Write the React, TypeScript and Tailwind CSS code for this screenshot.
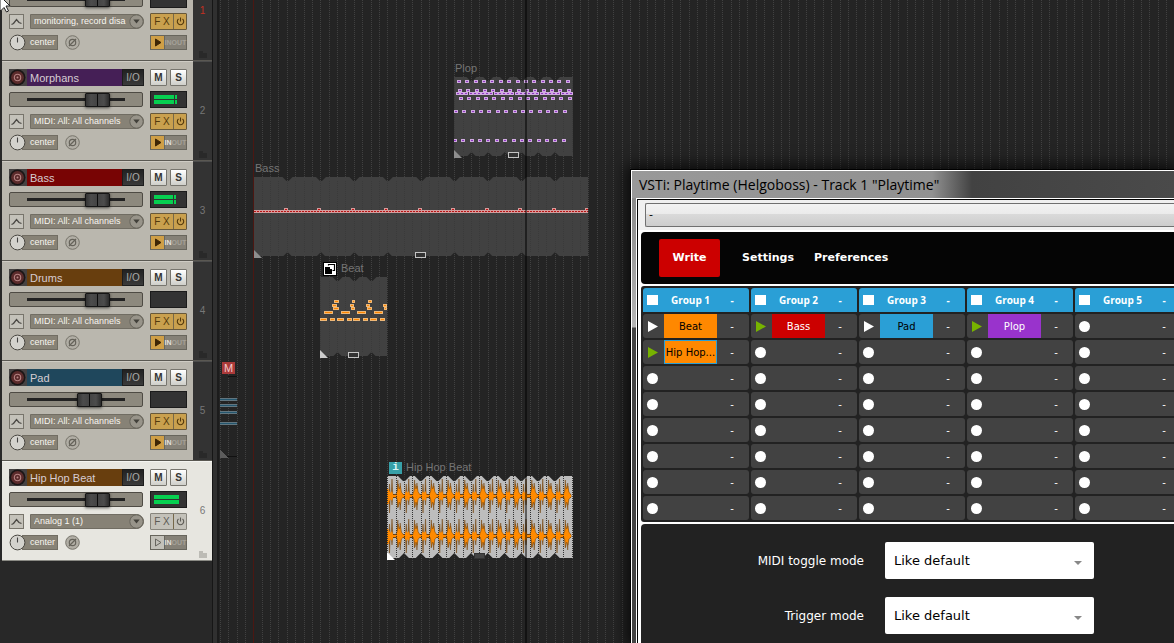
import clsx from "clsx";
import type { ReactNode } from "react";

interface Track {
  id: number;
  name: string;
  color: string;
  input: string;
  level: number;
  peak?: boolean;
  volume: number;
  fx?: boolean;
  selected?: boolean;
  inputLit?: boolean;
  scrolledOff?: boolean;
}

const MIDI_INPUT = "MIDI: All: All channels";

const tracks: Track[] = [
  { id: 1, name: "Playtime", color: "bg-[#3c3c3c]", input: "monitoring, record disa", level: 0, volume: 70, fx: true, scrolledOff: true },
  { id: 2, name: "Morphans", color: "bg-[#451f56]", input: MIDI_INPUT, level: 20, peak: true, volume: 70, fx: true, inputLit: true },
  { id: 3, name: "Bass", color: "bg-[#780404]", input: MIDI_INPUT, level: 19, peak: true, volume: 70, fx: true, inputLit: true },
  { id: 4, name: "Drums", color: "bg-[#683e0e]", input: MIDI_INPUT, level: 0, volume: 70, fx: true, inputLit: true },
  { id: 5, name: "Pad", color: "bg-[#1f475c]", input: MIDI_INPUT, level: 0, volume: 63, fx: true, inputLit: true },
  { id: 6, name: "Hip Hop Beat", color: "bg-[#683e0e]", input: "Analog 1 (1)", level: 25, volume: 70, selected: true, inputLit: true },
];

function Meter({ level, peak }: { level: number; peak?: boolean }) {
  return (
    <div className="flex h-[17px] w-[37px] flex-col justify-center gap-px border border-[#1b1b1b] bg-[#333] pl-[3px]">
      {level > 0 &&
        [0, 1].map((channel) => (
          <div key={channel} className="flex h-1 gap-px">
            <div className="bg-[#06d050]" style={{ width: level }} />
            {peak && <div className="w-0.5 bg-[#06d050]" />}
          </div>
        ))}
    </div>
  );
}

function TrackHeader({ track }: { track: Track }) {
  const smallButton =
    "flex h-[17px] w-[17px] items-center justify-center rounded-[1px] border border-[#77756e] bg-gradient-to-b from-white to-[#cfcfca] text-[10px] font-bold text-[#333]";

  return (
    <div className="flex h-[17px] items-center">
      <button type="button" aria-label="Record arm" className="flex h-full w-[18px] items-center bg-[#454242]">
        <svg viewBox="0 0 17 17" className="h-[17px] w-[17px]">
          <circle cx="8.5" cy="8.5" r="8" fill="#1b1616" />
          <circle cx="8.5" cy="8.5" r="6.4" fill="#5b2b2b" />
          <circle cx="8.5" cy="8.5" r="3.2" fill="none" stroke="#b88484" strokeWidth="1.1" />
          <circle cx="8.5" cy="8.5" r="1" fill="#b88484" />
        </svg>
      </button>
      <span className={clsx("h-full w-[95px] truncate pl-[3px] text-[11px] leading-[18px] text-[#d6ccd2]", track.color)}>
        {track.name}
      </span>
      <button type="button" className="h-full w-[22px] border border-[#1c1c1c] bg-gradient-to-b from-[#222] to-[#3a3a3a] text-[10px] leading-[15px] text-[#aaa]">
        I/O
      </button>
      <div className="ml-auto flex gap-[3px]">
        <button type="button" className={smallButton}>M</button>
        <button type="button" className={smallButton}>S</button>
      </div>
    </div>
  );
}

function TrackPanel({ track }: { track: Track }) {
  return (
    <li
      className={clsx(
        "flex h-[100px] border-b",
        track.selected ? "border-[#8a8a84] bg-[#e7e6e0]" : "border-[#5a5852] bg-[#333]",
      )}
    >
      <div
        className={clsx(
          "flex w-[191px] flex-col gap-[5px] border-t pt-[7px] pr-[6px] pl-[7px]",
          track.selected ? "border-[#f4f4f0]" : "border-[#cfccc4] bg-[#bab7ae]",
        )}
      >
        {track.scrolledOff ? <div className="h-[17px]" /> : <TrackHeader track={track} />}

        <div className="flex h-[17px] items-center justify-between">
          <input
            type="range"
            aria-label={`${track.name} volume`}
            defaultValue={track.volume}
            className="h-[15px] w-[134px] appearance-none rounded-[2px] border border-[#4e4b44] bg-[#8d897e] bg-[linear-gradient(#222,#222)] bg-[length:98px_3px] bg-center bg-no-repeat [&::-webkit-slider-thumb]:h-[14px] [&::-webkit-slider-thumb]:w-[25px] [&::-webkit-slider-thumb]:appearance-none [&::-webkit-slider-thumb]:rounded-[1px] [&::-webkit-slider-thumb]:border [&::-webkit-slider-thumb]:border-[#151515] [&::-webkit-slider-thumb]:bg-[linear-gradient(to_right,#333_0,#4c4c4c_5px,#444_11px,#0c0c0c_11px,#0c0c0c_12px,#444_12px,#4c4c4c_18px,#2b2b2b_23px)] [&::-webkit-slider-thumb]:shadow-[0_1px_3px_#0009]"
          />
          <Meter level={track.level} peak={track.peak} />
        </div>

        <div className="flex h-[17px] items-center">
          <button type="button" aria-label="Envelopes" className="flex h-[15px] w-[15px] items-center justify-center border border-[#77746b] bg-[#c4c2ba]">
            <svg viewBox="0 0 11 11" className="h-[11px] w-[11px]" fill="none" stroke="#4a4844" strokeWidth="1.3">
              <path d="M.5 8.5 2.5 7.5 5.5 3.5 8 6.5 10.5 7.5" />
            </svg>
          </button>
          <div className="relative ml-[6px]">
            <select
              aria-label={`${track.name} input`}
              className="block h-[15px] w-[114px] appearance-none overflow-hidden rounded-l-[1px] rounded-r-full border border-[#716d63] bg-[#878276] pr-[13px] pl-[3px] text-[9px] leading-[13px] text-[#f8f6f0]"
            >
              <option>{track.input}</option>
            </select>
            <svg viewBox="0 0 15 15" className="pointer-events-none absolute top-0 right-0 h-[15px] w-[15px]">
              <circle cx="7.5" cy="7.5" r="6.7" fill="#98948a" stroke="#68655c" />
              <path d="M4.3 5.6h6.4L7.5 9.6z" fill="#42403a" />
            </svg>
          </div>
          <div
            className={clsx(
              "ml-auto flex h-[17px] w-[37px] rounded-[1px] border text-[10px]",
              track.fx ? "border-[#67583a] bg-[#c9a04e] text-[#54390c]" : "border-[#87857d] bg-[#c3c1b9] text-[#5d5b55]",
            )}
          >
            <button type="button" className="w-[23px] border-r border-[#76684a] leading-[15px]">F X</button>
            <button type="button" aria-label="Bypass effects" className="flex flex-1 items-center justify-center">
              <svg viewBox="0 0 9 9" className="h-[9px] w-[9px]" fill="none" stroke="currentColor" strokeWidth="1.1">
                <path d="M2.5 2a3.2 3.2 0 1 0 4 0M4.5.5v4" />
              </svg>
            </button>
          </div>
        </div>

        <div className="flex h-[15px] items-center">
          <button type="button" aria-label="Pan" className="z-10">
            <svg viewBox="0 0 17 17" className="h-[17px] w-[17px]">
              <circle cx="8.5" cy="8.5" r="7.4" fill="#d3d2cd" stroke="#4b4943" />
              <path d="M8.5 3.5v5" stroke="#444" strokeWidth="1.1" />
            </svg>
          </button>
          <span className="-ml-1 h-[15px] w-[36px] border border-[#716d63] bg-[#878276] pl-[7px] text-[9px] leading-[13px] text-[#f8f6f0]">
            center
          </span>
          <button type="button" aria-label="Invert phase" className="ml-[7px]">
            <svg viewBox="0 0 15 15" className="h-[15px] w-[15px]" fill="none" stroke="#66635b">
              <circle cx="7.5" cy="7.5" r="6.8" fill="#b1aea5" stroke="#77746b" />
              <circle cx="7.5" cy="7.5" r="3.2" strokeWidth="1.2" />
              <path d="M4 11 11 4" strokeWidth="1.2" />
            </svg>
          </button>
          <div className="ml-auto flex h-[15px] w-[37px] border border-[#67655c]">
            <button
              type="button"
              aria-label="Monitor input"
              className={clsx(
                "flex w-[14px] shrink-0 items-center justify-center border-r border-[#67655c]",
                track.fx ? "bg-[#cf9f47]" : "bg-[#c3c1b9]",
              )}
            >
              <svg viewBox="0 0 8 9" className="h-[9px] w-2">
                <path d="M1.5 1 7 4.5 1.5 8z" fill={track.fx ? "#3e2605" : "none"} stroke={track.fx ? "#3e2605" : "#68665f"} />
              </svg>
            </button>
            <button type="button" className="flex min-w-0 flex-1 items-center justify-center bg-[#858177] text-[7px] leading-[13px] font-bold text-[#a5a299]">
              <span className={track.inputLit ? "text-[#e5e3de]" : ""}>IN</span>OUT
            </button>
          </div>
        </div>
      </div>
      <div
        className={clsx(
          "flex flex-1 flex-col items-center border-t text-[#777]",
          track.selected ? "border-[#f4f4f0]" : "border-[#4c4c4c]",
        )}
      >
        <span className={clsx("pt-[43px] text-[10px] leading-3", track.id === 1 && "text-[#c43022]")}>{track.id}</span>
        <svg viewBox="0 0 8 7" className={clsx("mt-auto mb-[2px] h-[7px] w-2", track.selected ? "fill-[#bcbbb5]" : "fill-[#292929]")}>
          <path d="M0 0h4v2h4v5H0z" />
        </svg>
      </div>
    </li>
  );
}

const GRID_START = 220.3;
const GRID_STEP = 8.375;
const CANVAS_LEFT = 219;

function gridXs(from: number, to: number) {
  const xs: number[] = [];
  for (let x = GRID_START; x < to; x += GRID_STEP) {
    if (x >= from) xs.push(Math.floor(x) + 0.5);
  }
  return xs;
}

function GridLines({ from, to, top, bottom, stroke }: { from: number; to: number; top: number; bottom: number; stroke: string }) {
  return (
    <g stroke={stroke} strokeDasharray="1 1">
      {gridXs(from, to).map((x) => (
        <path key={x} d={`M${x} ${top}V${bottom}`} />
      ))}
    </g>
  );
}

// Item outline with a small notch at each loop point
function itemPath(x: number, y: number, w: number, h: number, notches: number[], size: number) {
  const top = notches.map((n) => `L${n - size - 1} ${y}L${n - 1} ${y + size}H${n + 1}L${n + size + 1} ${y}`).join("");
  const bottom = [...notches]
    .reverse()
    .map((n) => `L${n + size} ${y + h}L${n} ${y + h - size}L${n - size} ${y + h}`)
    .join("");
  return `M${x} ${y}${top}H${x + w}V${y + h}${bottom}H${x}Z`;
}

function range(count: number) {
  return Array.from({ length: count }, (_, i) => i);
}

interface MediaItemProps {
  label: string;
  badge?: ReactNode;
  x: number;
  y: number;
  w: number;
  h: number;
  notches: number[];
  handle: number;
  audio?: boolean;
  brightCorner?: boolean;
  children: ReactNode;
}

function MediaItem({ label, badge, x, y, w, h, notches, handle, audio, brightCorner, children }: MediaItemProps) {
  const corner = audio ? "#fff" : brightCorner ? "#ccc" : "#8d8d8d";

  return (
    <div className="absolute" style={{ left: x - CANVAS_LEFT, top: y - 17 }}>
      <div className="flex h-[17px] items-center gap-1 text-[11px] whitespace-nowrap text-[#757575]">
        {badge}
        <span className={badge ? "" : "pl-px"}>{label}</span>
      </div>
      <svg width={w} height={h + 3} viewBox={`${x} ${y} ${w} ${h + 3}`} className="block">
        <path d={itemPath(x, y, w, h, notches, audio ? 5 : 4)} fill={audio ? "#bdbdbd" : "#414141"} />
        {!audio && <GridLines from={x} to={x + w} top={y + 4} bottom={y + h - 4} stroke="#3a3a3a" />}
        {children}
        {audio && <GridLines from={x} to={x + w} top={y} bottom={y + h} stroke="#333" />}
        <path d={`M${x} ${y + h - 6}v8h8z`} fill={corner} />
        <rect
          x={handle + 0.5}
          y={y + h - (audio ? 5 : 4) + 0.5}
          width="10"
          height="5"
          fill={audio ? "#444" : "#333"}
          stroke={audio ? "#333" : "#c4c4c4"}
        />
      </svg>
    </div>
  );
}

function Note({ x, y, w = 4, color, edge }: { x: number; y: number; w?: number; color: string; edge: string }) {
  return (
    <g shapeRendering="crispEdges">
      <rect x={x} y={y} width={w} height="3" fill={edge} />
      <rect x={x + 1} y={y + 1} width={w - 2} height="1" fill={color} />
    </g>
  );
}

const plopRows = [
  { y: 80, x: 457, step: 8.36, count: 14 },
  { y: 89, x: 458, step: 8.36, count: 14 },
  { y: 92, x: 456, step: 4.18, count: 28 },
  { y: 97, x: 459, step: 8.36, count: 14 },
  { y: 110, x: 454, step: 8.36, count: 14 },
  { y: 139, x: 453, step: 8.36, count: 14 },
];

// x position and width of every drum hit
const beatRows: { y: number; hits: [number, number][] }[] = [
  { y: 300, hits: [[334, 5], [352, 3], [368, 4]] },
  { y: 304, hits: [[332, 5], [350, 4], [366, 4], [383, 4]] },
  { y: 307, hits: [[333, 6], [351, 4], [367, 5], [384, 3]] },
  { y: 311, hits: [[324, 9], [341, 9], [357, 9], [374, 9]] },
  { y: 318, hits: [[320, 7], [330, 5], [337, 7], [347, 5], [353, 7], [363, 5], [370, 7], [380, 5]] },
];

// Spikes of one beat: offset, reach above and below the centre
const spikes = [
  [2.5, 12, 17],
  [5, 17, 9],
  [10.8, 16, 12],
  [13.2, 13, 14],
];

function Waveform({ y }: { y: number }) {
  return (
    <g>
      <path d={`M387 ${y}H571`} stroke="#70400a" strokeWidth="4" />
      {range(11).map((i) => {
        const x = 387 + i * 16.75;
        return (
          <g key={i}>
            {spikes.map(([dx, up, down]) => (
              <path
                key={dx}
                d={`M${x + dx - 0.8} ${y} L${x + dx} ${y - up} L${x + dx + 0.8} ${y} L${x + dx} ${y + down} Z`}
                fill="#8a5414"
                stroke="#75450f"
                strokeWidth=".5"
              />
            ))}
            <path
              d={`M${x + 9} ${y - 2}l1.3-3 .8-7 1.1 5 1.2-3 1 6 2.2 3v2l-2.2 2-1 6-1.2-3-1.1 5-.8-7-1.3-4z`}
              fill="#ff8a00"
              stroke="#8a4f0a"
              strokeWidth=".6"
            />
            <path d={`M${x + 1} ${y - 2}l1.5-3 1 2 1.5-2 1 3v4l-1 3-1.5-2-1 2-1.5-3z`} fill="#ff8a00" />
          </g>
        );
      })}
      <path d={`M387 ${y}H571`} stroke="#ff8a00" strokeWidth="2" />
      <path d={`M387 ${y - 8}l2 2 1 4v4l-1 5-2 2z`} fill="#ff8a00" />
    </g>
  );
}

function Arrangement() {
  return (
    <main className="relative flex-1 overflow-hidden bg-[#242424]">
      <svg width="1200" height="2000" viewBox="219 0 1200 2000" className="absolute top-0 left-0" aria-hidden="true">
        <GridLines from={219} to={1419} top={0} bottom={2000} stroke="#414141" />
        <path d="M253.5 0V2000" stroke="#4c1712" />
      </svg>

      <MediaItem label="Plop" x={454} y={77} w={119} h={79} notches={range(6).map((i) => 471.5 + i * 16.7)} handle={508}>
        {plopRows.map((row) =>
          range(row.count).map((i) => (
            <Note key={`${row.y}-${i}`} x={Math.round(row.x + i * row.step)} y={row.y} color="#8f36c4" edge="#cfaae0" />
          )),
        )}
      </MediaItem>

      <MediaItem label="Bass" x={254} y={177} w={334} h={79} notches={range(9).map((i) => 287.5 + i * 33.45)} handle={415}>
        <g shapeRendering="crispEdges">
          <rect x="254" y="210" width="334" height="3" fill="#d39c9c" />
          <path d="M254 211.5H588" stroke="#b81414" strokeDasharray="2 1" />
        </g>
        {range(10).map((i) => (
          <Note key={i} x={Math.round(284 + i * 33.45)} y={208} color="#c01414" edge="#d39c9c" />
        ))}
      </MediaItem>

      <MediaItem
        label="Beat"
        badge={
          <svg viewBox="0 0 14 14" className="ml-[3px] h-[14px] w-[14px]">
            <rect x=".5" y=".5" width="13" height="13" fill="#fff" stroke="#000" />
            <path d="M5.5 3.5v-1h6v6h-2" fill="none" stroke="#000" strokeWidth="1.2" />
            <path d="M2 5h5v2h2v5H2z" fill="#000" />
          </svg>
        }
        x={320}
        y={277}
        w={67}
        h={79}
        notches={[337.5, 354.5, 371.5]}
        handle={348}
        brightCorner
      >
        {beatRows.map((row) =>
          row.hits.map(([x, w]) => <Note key={`${row.y}-${x}`} x={x} y={row.y} w={w} color="#ff8700" edge="#eeb878" />),
        )}
      </MediaItem>

      <MediaItem
        label="Hip Hop Beat"
        badge={
          <span className="ml-[2px] flex h-3 w-[13px] items-center justify-center bg-[#37a0a8] font-['Liberation_Mono',monospace] text-[11px] font-bold text-[#d9f4f4]">
            i
          </span>
        }
        x={387}
        y={476}
        w={186}
        h={82}
        notches={range(10).map((i) => 404 + i * 16.75)}
        handle={474}
        audio
      >
        <Waveform y={496} />
        <Waveform y={536} />
      </MediaItem>

      <div className="absolute top-[362px] left-0">
        <span className="ml-[3px] flex h-3 w-[13px] items-center justify-center bg-[#aa3a3a] text-[11px] text-[#f3caca]">M</span>
        <svg viewBox="220 374 18 86" className="ml-px block h-[86px] w-[18px]" shapeRendering="crispEdges">
          <path d="M228 376.5H237M226 456.5H237" stroke="#111" />
          {[398, 404, 411, 422].map((y) => (
            <g key={y}>
              <rect x="220" y={y} width="17" height="3" fill="#627680" />
              <rect x="220" y={y + 1} width="17" height="1" fill="#24566e" />
            </g>
          ))}
          <path d="M220 450v8h8z" fill="#5c5c5c" />
        </svg>
      </div>

      <div className="absolute inset-y-0 left-[306px] w-0.5 bg-black/50" />
    </main>
  );
}

type ClipState = "playing" | "stopped";

interface Clip {
  name: string;
  state: ClipState;
  style: string;
}

const groups: { name: string; clips: Clip[] }[] = [
  {
    name: "Group 1",
    clips: [
      { name: "Beat", state: "stopped", style: "bg-[#ff8800] text-black" },
      { name: "Hip Hop...", state: "playing", style: "border border-[#2a9fd6] bg-[#ff8800] text-black" },
    ],
  },
  { name: "Group 2", clips: [{ name: "Bass", state: "playing", style: "bg-[#cc0000] text-white" }] },
  { name: "Group 3", clips: [{ name: "Pad", state: "stopped", style: "bg-[#2a9fd6] text-black" }] },
  { name: "Group 4", clips: [{ name: "Plop", state: "playing", style: "bg-[#9933cc] text-white" }] },
  { name: "Group 5", clips: [] },
];

const SLOT_COUNT = 8;

function Slot({ clip }: { clip?: Clip }) {
  return (
    <div className="flex h-6 rounded-[3px] bg-[#424242]">
      <button type="button" aria-label={clip ? `Trigger ${clip.name}` : "Record"} className="flex w-[21px] items-center pl-1">
        {clip ? (
          <svg viewBox="0 0 11 11" className={clsx("h-[11px] w-[11px]", clip.state === "playing" ? "fill-[#77b300]" : "fill-white")}>
            <path d="M1 0 11 5.5 1 11z" />
          </svg>
        ) : (
          <span className="h-[11px] w-[11px] rounded-full bg-white" />
        )}
      </button>
      {clip ? (
        <button type="button" className={clsx("w-[53px] whitespace-nowrap", clip.style)}>{clip.name}</button>
      ) : (
        <span className="w-[53px]" />
      )}
      <button type="button" className="flex-1 pr-0.5">-</button>
    </div>
  );
}

function SettingRow({ id, label }: { id: string; label: string }) {
  return (
    <div className="flex items-center gap-[21px]">
      <label htmlFor={id} className="w-[223px] text-right text-[12px]">{label}</label>
      <div className="relative">
        <select id={id} className="block h-[37px] w-[209px] appearance-none rounded-[2px] bg-white px-[9px] text-[13px] text-black">
          <option>Like default</option>
        </select>
        <svg viewBox="0 0 8 4" className="pointer-events-none absolute top-[19px] right-3 h-1 w-2 fill-[#888]">
          <path d="M0 0h8L4 4z" />
        </svg>
      </div>
    </div>
  );
}

function PlaytimeWindow() {
  return (
    <section className="absolute top-[169px] right-0 bottom-0 left-[630px] flex flex-col border-t border-l border-black bg-[#444] shadow-[0_0_14px_4px_#000b]">
      <h1 className="h-[28px] overflow-hidden border-t border-l border-white bg-[linear-gradient(to_right,#999_0,#919191_300px,#424242_340px,#4a4a4a)] pl-[7px] font-['Open_Sans','Noto_Sans',sans-serif] text-[14px] leading-[28px] whitespace-nowrap text-black">
        VSTi: Playtime (Helgoboss) - Track 1 &quot;Playtime&quot;
      </h1>
      <div className="flex min-h-0 flex-1 border-l border-white bg-[linear-gradient(#8a8a8a,#b5b5b5_129px,#444_130px)] pl-1">
        <div className="flex min-w-0 flex-1 flex-col border-t border-l border-white">
          <div className="flex min-h-0 flex-1 flex-col overflow-hidden border-t border-l border-black bg-white font-['DejaVu_Sans',Verdana,sans-serif] text-white">
            <div className="bg-[#f0f0f0] pt-[3px] pb-[3px] pl-[7px]">
              <select
                aria-label="Preset"
                className="block h-6 w-full appearance-none rounded-l-[2px] border border-r-0 border-[#707070] bg-[linear-gradient(#f3f3f3,#ebebeb_45%,#dadada_46%,#cdcdcd)] px-[3px] text-[11px] text-black"
              >
                <option>-</option>
              </select>
            </div>
            <div className="flex min-h-0 flex-1 flex-col gap-0.5 pt-0.5 pl-[3px]">
              <nav className="flex h-[52px] shrink-0 items-center rounded-l-[4px] bg-[#050505] pl-[18px] text-[11px] font-bold">
                <button type="button" className="h-[38px] w-[61px] rounded-[2px] bg-[#cc0000] font-bold">Write</button>
                <button type="button" className="ml-[22px] font-bold">Settings</button>
                <button type="button" className="ml-5 font-bold">Preferences</button>
              </nav>
              <div className="flex shrink-0 gap-0.5 overflow-hidden rounded-l-[3px] bg-[#222] p-0.5 pr-0 text-[10px]">
                {groups.map((group) => (
                  <div key={group.name} className="flex w-[106px] shrink-0 flex-col gap-0.5">
                    <div className="flex h-6 items-center rounded-t-[3px] bg-[#2a9fd6] font-['Open_Sans','Noto_Sans',sans-serif] font-bold">
                      <button type="button" aria-label={`Stop ${group.name}`} className="w-[21px] pl-1">
                        <span className="block h-[10px] w-[11px] bg-white" />
                      </button>
                      <h2 className="w-[53px] text-center whitespace-nowrap">{group.name}</h2>
                      <button type="button" className="flex-1 pr-0.5">-</button>
                    </div>
                    {range(SLOT_COUNT).map((i) => (
                      <Slot key={i} clip={group.clips[i]} />
                    ))}
                  </div>
                ))}
              </div>
              <div className="flex flex-1 flex-col gap-[18px] overflow-hidden rounded-tl-[4px] bg-[#222] pt-[18px]">
                <SettingRow id="midi-toggle-mode" label="MIDI toggle mode" />
                <SettingRow id="trigger-mode" label="Trigger mode" />
              </div>
            </div>
          </div>
        </div>
      </div>
    </section>
  );
}

export default function App() {
  return (
    <div className="relative flex h-screen overflow-hidden bg-[#282828] font-['Liberation_Sans',Arial,sans-serif]">
      <aside className="w-[212px] shrink-0 overflow-hidden pl-0.5">
        <ul className="-mt-[39px]">
          {tracks.map((track) => (
            <TrackPanel key={track.id} track={track} />
          ))}
        </ul>
      </aside>
      <div className="w-[7px] shrink-0 border-r-2 border-l border-r-[#1c1c1c] border-l-[#161616] bg-[#303030]" />
      <Arrangement />
      <PlaytimeWindow />
      <svg viewBox="0 0 12 14" className="absolute top-0 left-0 h-[14px] w-3" aria-hidden="true">
        <path d="M0-4 10 6H6L8.5 11 6.5 12 4 7.5 1 10.5H0z" fill="#fff" stroke="#222" />
      </svg>
    </div>
  );
}
